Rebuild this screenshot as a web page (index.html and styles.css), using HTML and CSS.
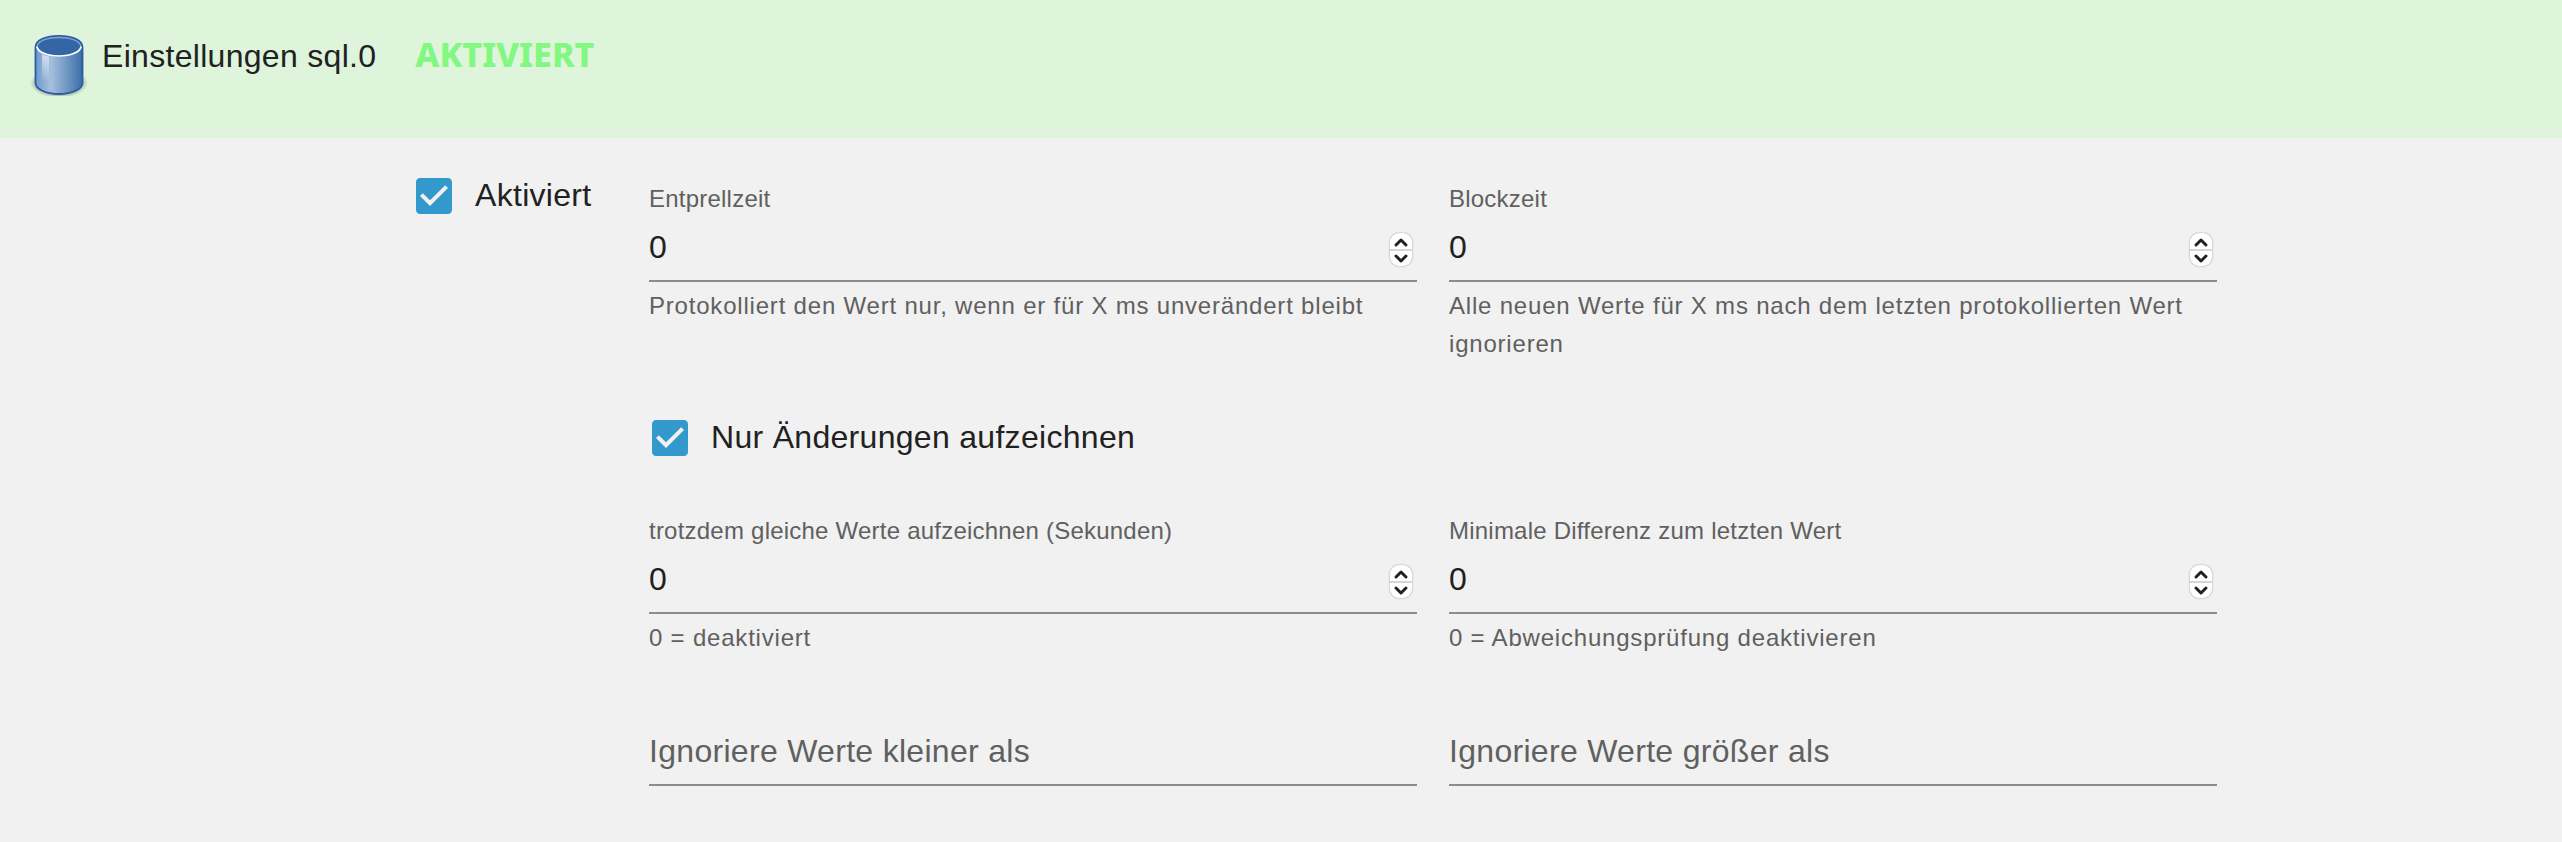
FILE: index.html
```html
<!DOCTYPE html>
<html lang="de">
<head>
  <meta charset="UTF-8" />
  <meta name="viewport" content="width=device-width, initial-scale=1.0" />
  <title>Einstellungen sql.0</title>
  <link rel="stylesheet" href="styles.css">
</head>
<body>
  <header class="header">
    <svg class="logo" viewBox="0 0 64 64" aria-hidden="true">
      <defs>
        <linearGradient id="side" x1="0" x2="1" y1="0" y2="0">
          <stop offset="0" stop-color="#6f9bcd" />
          <stop offset="0.33" stop-color="#a6bfdd" />
          <stop offset="1" stop-color="#3b6ea8" />
        </linearGradient>
        <linearGradient id="shine" x1="0" x2="0" y1="0" y2="1">
          <stop offset="0" stop-color="#ffffff" stop-opacity="0.6" />
          <stop offset="1" stop-color="#ffffff" stop-opacity="0" />
        </linearGradient>
        <radialGradient id="shadow">
          <stop offset="0.6" stop-color="#000000" stop-opacity="0.45" />
          <stop offset="1" stop-color="#000000" stop-opacity="0" />
        </radialGradient>
      </defs>
      <ellipse cx="33" cy="51" rx="29" ry="15" fill="url(#shadow)" />
      <path d="M9.500 15C9.500 8 20 3.800 33 3.800S56.500 8 56.500 15V51C56.500 57 46 62 33 62S9.500 57 9.500 51Z" fill="url(#side)" stroke="#2a5ca3" stroke-width="1.800" />
      <path d="M16 22Q19 24 23 24.500V50Q19 49 16 47Z" fill="url(#shine)" />
      <ellipse cx="33" cy="14.500" rx="22" ry="10" fill="#3465a4" />
      <path d="M11.200 14.500C12 9 21 5.500 33 5.500S54 9 54.800 14.500" fill="none" stroke="#7ba3d3" stroke-width="1.300" />
      <path d="M10.800 14.500C12 20 21 24 33 24S54 20 55.200 14.500" fill="none" stroke="#ffffff" stroke-width="1.700" />
    </svg>
    <h1 class="title">Einstellungen sql.0</h1>
    <span class="status">AKTIVIERT</span>
  </header>

  <main class="settings">
    <label class="check">
      <span class="check-box">
        <input type="checkbox" id="enabled" checked>
        <svg viewBox="0 0 24 24" aria-hidden="true"><path d="M19 3H5c-1.110 0-2 .9-2 2v14c0 1.100.89 2 2 2h14c1.110 0 2-.9 2-2V5c0-1.100-.89-2-2-2zm-9 14l-5-5 1.410-1.410L10 14.170l7.590-7.590L19 8l-9 9z" /></svg>
      </span>
      <span class="check-text">Aktiviert</span>
    </label>

    <div class="options">
      <div class="row">
        <div class="field">
          <label for="debounce">Entprellzeit</label>
          <div class="control">
            <input type="number" id="debounce" value="0">
            <div class="spinner">
              <button type="button" data-step="1" aria-label="+"><svg viewBox="0 0 22 16"><path d="M6 12l5-5 5 5" /></svg></button>
              <button type="button" data-step="-1" aria-label="-"><svg viewBox="0 0 22 16"><path d="M6 5l5 5 5-5" /></svg></button>
            </div>
          </div>
          <p class="helper">Protokolliert den Wert nur, wenn er für X ms unverändert bleibt</p>
        </div>
        <div class="field">
          <label for="block">Blockzeit</label>
          <div class="control">
            <input type="number" id="block" value="0">
            <div class="spinner">
              <button type="button" data-step="1" aria-label="+"><svg viewBox="0 0 22 16"><path d="M6 12l5-5 5 5" /></svg></button>
              <button type="button" data-step="-1" aria-label="-"><svg viewBox="0 0 22 16"><path d="M6 5l5 5 5-5" /></svg></button>
            </div>
          </div>
          <p class="helper">Alle neuen Werte für X ms nach dem letzten protokollierten Wert ignorieren</p>
        </div>
      </div>

      <label class="check changes">
        <span class="check-box">
          <input type="checkbox" id="changesOnly" checked>
          <svg viewBox="0 0 24 24" aria-hidden="true"><path d="M19 3H5c-1.110 0-2 .9-2 2v14c0 1.100.89 2 2 2h14c1.110 0 2-.9 2-2V5c0-1.100-.89-2-2-2zm-9 14l-5-5 1.410-1.410L10 14.170l7.590-7.590L19 8l-9 9z" /></svg>
        </span>
        <span class="check-text">Nur Änderungen aufzeichnen</span>
      </label>

      <div class="row">
        <div class="field">
          <label for="relog">trotzdem gleiche Werte aufzeichnen (Sekunden)</label>
          <div class="control">
            <input type="number" id="relog" value="0">
            <div class="spinner">
              <button type="button" data-step="1" aria-label="+"><svg viewBox="0 0 22 16"><path d="M6 12l5-5 5 5" /></svg></button>
              <button type="button" data-step="-1" aria-label="-"><svg viewBox="0 0 22 16"><path d="M6 5l5 5 5-5" /></svg></button>
            </div>
          </div>
          <p class="helper">0 = deaktiviert</p>
        </div>
        <div class="field">
          <label for="minDelta">Minimale Differenz zum letzten Wert</label>
          <div class="control">
            <input type="number" id="minDelta" value="0">
            <div class="spinner">
              <button type="button" data-step="1" aria-label="+"><svg viewBox="0 0 22 16"><path d="M6 12l5-5 5 5" /></svg></button>
              <button type="button" data-step="-1" aria-label="-"><svg viewBox="0 0 22 16"><path d="M6 5l5 5 5-5" /></svg></button>
            </div>
          </div>
          <p class="helper">0 = Abweichungsprüfung deaktivieren</p>
        </div>
      </div>

      <div class="row limits">
        <div class="field empty">
          <label for="ignoreBelow">Ignoriere Werte kleiner als</label>
          <div class="control"><input type="text" id="ignoreBelow"></div>
        </div>
        <div class="field empty">
          <label for="ignoreAbove">Ignoriere Werte größer als</label>
          <div class="control"><input type="text" id="ignoreAbove"></div>
        </div>
      </div>
    </div>
  </main>

  <script>
    document.querySelectorAll('.spinner button').forEach(btn => {
      btn.addEventListener('click', () => {
        const input = btn.closest('.control').querySelector('input');
        input.value = Number(input.value) + Number(btn.dataset.step);
      });
    });
  </script>
</body>
</html>
```
FILE: styles.css
```css
* {
  box-sizing: border-box;
}

body {
  margin: 0;
  font-family: "Liberation Sans", Helvetica, Arial, sans-serif;
  font-size: 32px;
  line-height: 48px;
  letter-spacing: 0.00938em;
  background: #f1f1f1;
  color: #212121;
}

.header {
  display: flex;
  align-items: baseline;
  padding: 30px 26px;
  min-height: 138px;
  background: #def4db;
}

.logo {
  width: 64px;
  height: 64px;
  margin-top: 2px;
  align-self: flex-start;
}

.title {
  margin: 0 39px 0 12px;
  font-size: 32px;
  font-weight: normal;
}

.status {
  font-family: "Noto Sans", Tahoma, sans-serif;
  font-size: 34px;
  font-weight: 800;
  letter-spacing: normal;
  color: #82f882;
}

.settings {
  display: grid;
  grid-template-columns: 239px 1fr;
  align-items: start;
  padding: 34px 345px 56px 410px;
}

.check {
  display: inline-flex;
  gap: 17px;
  cursor: pointer;
}

.check-box {
  position: relative;
  width: 48px;
  height: 48px;
}

.check-box input {
  position: absolute;
  inset: 0;
  width: 100%;
  height: 100%;
  margin: 0;
  opacity: 0;
  cursor: pointer;
}

.check-box svg {
  display: block;
  fill: #3399cc;
}

.check-box input:not(:checked) + svg {
  fill: #8c8c8c;
}

.check-text {
  line-height: 46px;
}

.options {
  padding-top: 12px;
}

.row {
  display: grid;
  grid-template-columns: 1fr 1fr;
  gap: 32px;
}

.changes {
  display: flex;
  margin: 51px 0 54px -3px;
}

.limits {
  margin-top: 31px;
}

.field {
  position: relative;
}

.field label {
  display: block;
  padding-bottom: 2px;
  font-size: 24px;
  line-height: 30px;
  letter-spacing: 0.00938em;
  color: #606060;
}

.control {
  display: flex;
  align-items: center;
  border-bottom: 2px solid #8c8c8c;
}

.control input {
  flex: 1;
  min-width: 0;
  height: 64px;
  padding: 0 0 2px;
  border: none;
  outline: none;
  background: none;
  font: inherit;
  color: inherit;
  appearance: textfield;
}

.control input::-webkit-inner-spin-button {
  appearance: none;
}

.spinner {
  display: flex;
  flex-direction: column;
  width: 22px;
  margin: 3px 5px 0 0;
  border-radius: 9px;
  background: #fff;
  box-shadow: 0 0 2px rgba(0, 0, 0, 0.4);
  overflow: hidden;
}

.spinner button {
  display: block;
  height: 16px;
  padding: 0;
  border: none;
  background: none;
  cursor: pointer;
}

.spinner button + button {
  height: 17px;
  border-top: 2px solid #d6d6d6;
}

.spinner svg {
  display: block;
  width: 22px;
  height: 16px;
  fill: none;
  stroke: #212121;
  stroke-width: 3;
  stroke-linecap: round;
  stroke-linejoin: round;
}

.helper {
  margin: 5px 0 0;
  font-size: 24px;
  line-height: 38px;
  letter-spacing: 0.03333em;
  color: #606060;
}

.empty {
  padding-top: 32px;
}

.empty label {
  position: absolute;
  left: 0;
  bottom: 2px;
  font-size: 32px;
  line-height: 62px;
}
```
